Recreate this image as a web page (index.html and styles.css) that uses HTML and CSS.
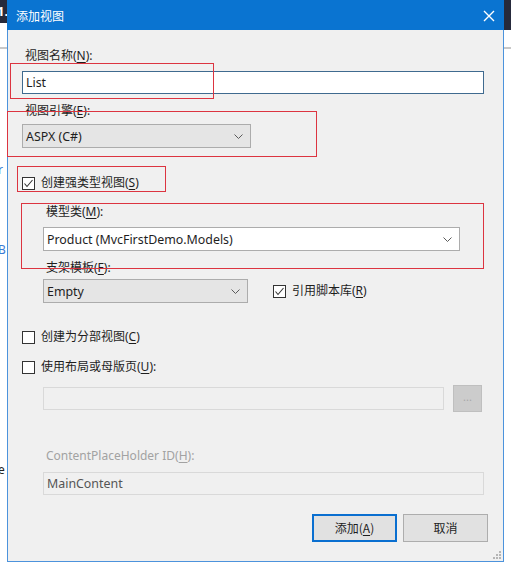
FILE: index.html
```html
<!DOCTYPE html>
<html lang="zh-CN">
<head>
    <meta charset="UTF-8">
    <title>添加视图</title>
    <link rel="stylesheet" href="styles.css">
</head>
<body>
    <div class="screen">
        <div class="side side-left">
            <div class="side-top"><span class="side-glyph">1.</span></div>
            <div class="side-rule"></div>
            <span class="side-char char-r">r</span>
            <span class="side-char char-b">B</span>
            <span class="side-char char-e">e</span>
        </div>

        <div class="dialog">
            <div class="titlebar">
                <span class="title">添加视图</span>
                <svg class="close" width="12" height="12" viewBox="0 0 12 12">
                    <path d="M1 1 L11 11 M11 1 L1 11" stroke="#fff" stroke-width="1.4" fill="none"/>
                </svg>
            </div>

            <div class="content">
                <div class="label row-name">视图名称(<u>N</u>):</div>
                <div class="textbox focused">List</div>

                <div class="label row-engine">视图引擎(<u>E</u>):</div>
                <div class="combo combo-gray combo-engine">
                    <span>ASPX (C#)</span>
                    <svg width="9" height="5" viewBox="0 0 9 5"><polyline points="0.5,0.5 4.5,4.5 8.5,0.5" fill="none" stroke="#5a5a5a"/></svg>
                </div>

                <label class="check row-strong">
                    <span class="box"><svg width="11" height="11" viewBox="0 0 11 11"><polyline points="1.5,5.5 4,8.5 9.5,2" fill="none" stroke="#333" stroke-width="1.1"/></svg></span>
                    <span>创建强类型视图(<u>S</u>)</span>
                </label>

                <div class="group">
                    <div class="label sub row-model">模型类(<u>M</u>):</div>
                    <div class="combo combo-model">
                        <span>Product (MvcFirstDemo.Models)</span>
                        <svg width="9" height="5" viewBox="0 0 9 5"><polyline points="0.5,0.5 4.5,4.5 8.5,0.5" fill="none" stroke="#5a5a5a"/></svg>
                    </div>

                    <div class="label sub row-template">支架模板(<u>F</u>):</div>
                    <div class="template-row">
                        <div class="combo combo-gray combo-template">
                            <span>Empty</span>
                            <svg width="9" height="5" viewBox="0 0 9 5"><polyline points="0.5,0.5 4.5,4.5 8.5,0.5" fill="none" stroke="#5a5a5a"/></svg>
                        </div>
                        <label class="check">
                            <span class="box"><svg width="11" height="11" viewBox="0 0 11 11"><polyline points="1.5,5.5 4,8.5 9.5,2" fill="none" stroke="#333" stroke-width="1.1"/></svg></span>
                            <span>引用脚本库(<u>R</u>)</span>
                        </label>
                    </div>
                </div>

                <label class="check row-partial">
                    <span class="box"></span>
                    <span>创建为分部视图(<u>C</u>)</span>
                </label>

                <label class="check row-layout">
                    <span class="box"></span>
                    <span>使用布局或母版页(<u>U</u>):</span>
                </label>

                <div class="group">
                    <div class="layout-row">
                        <div class="textbox disabled layout-path"></div>
                        <div class="browse">...</div>
                    </div>

                    <div class="label sub muted row-holder">ContentPlaceHolder ID(<u>H</u>):</div>
                    <div class="textbox disabled holder">MainContent</div>
                </div>

                <div class="actions">
                    <div class="btn btn-default">添加(<u>A</u>)</div>
                    <div class="btn">取消</div>
                </div>
            </div>

            <svg class="grip" width="8" height="8" viewBox="0 0 8 8" fill="#b5b5b5">
                <rect x="6" y="0" width="2" height="2"/>
                <rect x="3" y="3" width="2" height="2"/>
                <rect x="6" y="3" width="2" height="2"/>
                <rect x="0" y="6" width="2" height="2"/>
                <rect x="3" y="6" width="2" height="2"/>
                <rect x="6" y="6" width="2" height="2"/>
            </svg>
        </div>

        <div class="side side-right">
            <div class="side-top tall"></div>
            <div class="side-rule"></div>
        </div>

        <!-- annotations drawn over the dialog -->
        <div class="mark mark-name"></div>
        <div class="mark mark-engine"></div>
        <div class="mark mark-strong"></div>
        <div class="mark mark-model"></div>
    </div>
</body>
</html>
```

FILE: styles.css
```css
body {
    margin: 0;
    background: #fff;
    font-family: "Noto Sans", "Noto Sans CJK SC", sans-serif;
    font-size: 12px;
    color: #1e1e1e;
}
u {
    text-underline-offset: 2px;
}
.screen {
    position: relative;
    display: flex;
    height: 567px;
    overflow: hidden;
}

/* background window strips */
.side {
    position: relative;
    width: 7px;
    flex: none;
    overflow: hidden;
}
.side-top {
    height: 23px;
    background: #262a3c;
    color: #fff;
    font-weight: bold;
    font-size: 13px;
    line-height: 23px;
}
.side-top.tall {
    height: 30px;
}
.side-glyph {
    margin-left: -3px;
}
.side-rule {
    margin-top: 24px;
    height: 2px;
    background: #c8c8c8;
}
.side-right .side-rule {
    margin-top: 17px;
}
.side-char {
    position: absolute;
    left: -2px;
    font-size: 12px;
    line-height: 14px;
    color: #3a7bd5;
}
.char-r { top: 163px; }
.char-b { top: 243px; }
.char-e { top: 463px; color: #222; }

/* dialog */
.dialog {
    position: relative;
    width: 495px;
    height: 561px;
    flex: none;
    background: #f0f0f0;
    border: 1px solid #4c93dc;
    border-top: 0;
}
.titlebar {
    display: flex;
    align-items: center;
    justify-content: space-between;
    height: 30px;
    margin: 0 -1px;
    padding: 0 9px 0 9px;
    background: #0a74d1;
    box-sizing: border-box;
}
.title {
    color: #fff;
    font-family: "Noto Sans CJK SC", sans-serif;
    font-size: 12px;
}
.close {
    margin-top: 1px;
}
.content {
    padding: 0 19px 0 14px;
}
.label {
    height: 16px;
    line-height: 16px;
    margin-left: 3px;
}
.muted {
    color: #a2a2a2;
}
.row-name { margin-top: 18px; }
.row-engine { margin-top: 9px; }
.row-strong { margin-top: 27px; }
.row-model { margin-top: 13px; }
.row-template { margin-top: 9px; }
.row-partial { margin-top: 26px; }
.row-layout { margin-top: 14px; }
.row-holder { margin-top: 36px; }

.textbox {
    height: 23px;
    line-height: 21px;
    padding: 0 3px;
    background: #fff;
    border: 1px solid #abadb3;
    box-sizing: border-box;
    font-size: 12.4px;
}
.textbox.focused {
    margin-top: 7px;
    border-color: #3f6a8f;
}
.textbox.disabled {
    background: #f0f0f0;
    border-color: #d9d9d9;
    color: #555;
}

.combo {
    display: flex;
    align-items: center;
    justify-content: space-between;
    height: 24px;
    padding: 0 7px 0 3px;
    background: #fff;
    border: 1px solid #acacac;
    box-sizing: border-box;
    font-size: 12.4px;
}
.combo-gray {
    background: #e5e5e5;
}
.combo-engine {
    width: 229px;
    margin-top: 5px;
}
.combo-model {
    margin-top: 7px;
    margin-right: 24px;
}
.combo-template {
    width: 205px;
}

.group {
    margin-left: 21px;
}
.template-row {
    display: flex;
    align-items: center;
    gap: 25px;
    margin-top: 3px;
}

.check {
    display: flex;
    align-items: center;
    gap: 6px;
    height: 16px;
    line-height: 16px;
}
.box {
    display: flex;
    align-items: center;
    justify-content: center;
    width: 13px;
    height: 13px;
    background: #fff;
    border: 1px solid #333;
    box-sizing: border-box;
}

.layout-row {
    display: flex;
    align-items: center;
    gap: 9px;
    height: 27px;
    margin-top: 10px;
}
.layout-path {
    width: 401px;
}
.browse {
    width: 29px;
    height: 27px;
    background: #cccccc;
    border: 1px solid #bfbfbf;
    box-sizing: border-box;
    color: #a8a8a8;
    text-align: center;
    line-height: 22px;
    font-size: 11px;
}
.holder {
    margin-top: 8px;
}

.actions {
    display: flex;
    justify-content: flex-end;
    gap: 6px;
    margin-top: 19px;
    margin-right: -4px;
}
.btn {
    width: 85px;
    height: 28px;
    line-height: 26px;
    text-align: center;
    background: #e1e1e1;
    border: 1px solid #adadad;
    box-sizing: border-box;
    font-family: "Noto Sans CJK SC", sans-serif;
}
.btn-default {
    border: 2px solid #0a6fd0;
    line-height: 24px;
}
.grip {
    position: absolute;
    right: 2px;
    bottom: 2px;
}

/* red annotation boxes */
.mark {
    position: absolute;
    border: 1px solid #dc3440;
    box-sizing: border-box;
}
.mark-name { left: 10px; top: 63px; width: 204px; height: 36px; }
.mark-engine { left: 7px; top: 111px; width: 310px; height: 46px; }
.mark-strong { left: 17px; top: 166px; width: 149px; height: 26px; }
.mark-model { left: 21px; top: 203px; width: 463px; height: 66px; }
```
